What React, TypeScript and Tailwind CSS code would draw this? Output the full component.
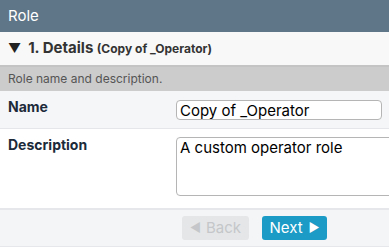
export default function App() {
  return (
    <div className="w-[389px] h-[250px] overflow-hidden bg-white font-['Inter',sans-serif]">
      {/* Title bar */}
      <div className="h-[32px] bg-[#5f7588] flex items-center px-2 text-white text-[15px]">Role</div>

      {/* Section header */}
      <div className="h-[35px] bg-[#f8f8f8] flex items-center px-2 gap-[7px] border-b-2 border-[#c4c4c4]">
        <span className="text-[13px] text-[#222]">▼</span>
        <span className="font-bold text-[15px] text-[#333]">
          1. Details <span className="text-[12px]">(Copy of _Operator)</span>
        </span>
      </div>

      <div className="h-[24px] bg-[#cccccc] flex items-center px-2 text-[12px] text-[#555]">
        Role name and description.
      </div>

      {/* Name row */}
      <div className="h-[38px] bg-[#f5f6f8] flex items-start border-b border-[#e4e6ea]">
        <div className="w-[176px] shrink-0 pl-2 pt-[5px] font-bold text-[14px] text-[#1c2a3a]">Name</div>
        <input
          readOnly
          value="Copy of _Operator"
          className="mt-[9px] w-[206px] shrink-0 h-[20px] px-[3px] rounded-[4px] border border-[#b5b5b5] bg-white text-[15px] text-black leading-none"
        />
      </div>

      {/* Description row */}
      <div className="h-[79px] bg-white flex items-start">
        <div className="w-[176px] shrink-0 pl-2 pt-[5px] font-bold text-[14px] text-[#1c2a3a]">Description</div>
        <textarea
          readOnly
          value="A custom operator role"
          className="mt-[8px] w-[230px] shrink-0 h-[59px] px-[3px] py-0 rounded-[4px] border border-[#b5b5b5] bg-white text-[15px] text-black resize-none leading-[20px]"
        />
      </div>

      {/* Footer */}
      <div className="h-[39px] bg-[#f4f5f7] border-t-2 border-b border-[#e6e7ea] flex items-center pl-[182px] gap-[13px]">
        <button className="w-[67px] h-[24px] rounded-[3px] bg-[#e5e6e8] text-[#c4c6c9] text-[15px] flex items-center justify-center gap-[5px]">
          <span className="text-[12px]">◀</span>Back
        </button>
        <button className="w-[65px] h-[24px] rounded-[3px] bg-[#1b9bc6] text-white text-[15px] flex items-center justify-center gap-[6px]">
          Next<span className="text-[12px]">▶</span>
        </button>
      </div>
    </div>
  )
}
